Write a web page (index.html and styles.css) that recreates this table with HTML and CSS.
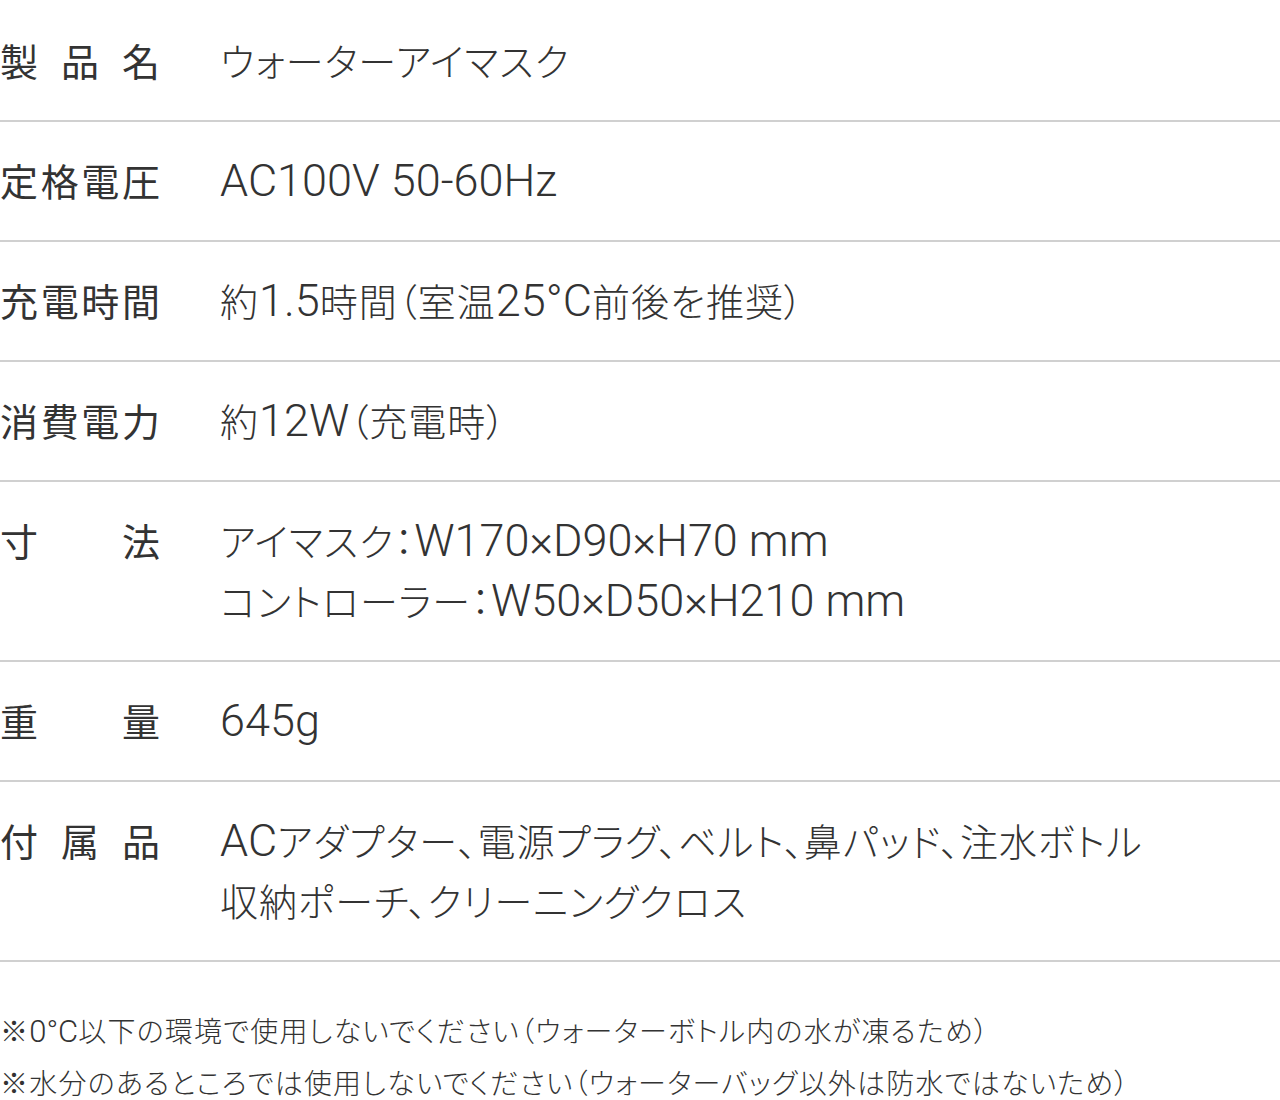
FILE: index.html
```html
<!DOCTYPE html>
<html lang="ja">
<head>
  <meta charset="UTF-8" />
  <meta name="viewport" content="width=device-width, initial-scale=1" />
  <title>ウォーターアイマスク 仕様</title>
  <link rel="stylesheet" href="styles.css">
</head>
<body>
  <div class="spec">
    <div class="spec-row">
      <div class="label"><span>製</span><span>品</span><span>名</span></div>
      <div class="value">ウォーターアイマスク</div>
    </div>
    <div class="spec-row">
      <div class="label"><span>定</span><span>格</span><span>電</span><span>圧</span></div>
      <div class="value"><span class="en">AC100V 50-60Hz</span></div>
    </div>
    <div class="spec-row">
      <div class="label"><span>充</span><span>電</span><span>時</span><span>間</span></div>
      <div class="value">約<span class="en">1.5</span>時間（室温<span class="en">25°C</span>前後を推奨）</div>
    </div>
    <div class="spec-row">
      <div class="label"><span>消</span><span>費</span><span>電</span><span>力</span></div>
      <div class="value">約<span class="en">12W</span>（充電時）</div>
    </div>
    <div class="spec-row">
      <div class="label"><span>寸</span><span>法</span></div>
      <div class="value">アイマスク：<span class="en">W170×D90×H70 mm</span><br>コントローラー：<span class="en">W50×D50×H210 mm</span></div>
    </div>
    <div class="spec-row">
      <div class="label"><span>重</span><span>量</span></div>
      <div class="value"><span class="en">645g</span></div>
    </div>
    <div class="spec-row">
      <div class="label"><span>付</span><span>属</span><span>品</span></div>
      <div class="value"><span class="en">AC</span>アダプター、電源プラグ、ベルト、鼻パッド、注水ボトル<br>収納ポーチ、クリーニングクロス</div>
    </div>
  </div>

  <div class="notes">
    <p>※<span class="en">0°C</span>以下の環境で使用しないでください（ウォーターボトル内の水が凍るため）</p>
    <p>※水分のあるところでは使用しないでください（ウォーターバッグ以外は防水ではないため）</p>
  </div>
</body>
</html>
```

FILE: styles.css
```css
* {
  margin: 0;
  padding: 0;
  box-sizing: border-box;
}

body {
  background: #fff;
  color: #333;
  font-family: 'Noto Sans CJK JP', 'Noto Sans', sans-serif;
  font-weight: 300;
  font-feature-settings: "palt";
}

.spec {
  padding-top: 2px;
}

.spec-row {
  display: flex;
  padding: 28px 0 30px;
  border-bottom: 2px solid #d0d0d0;
}

.label {
  display: flex;
  justify-content: space-between;
  width: 160px;
  flex-shrink: 0;
  font-size: 38px;
  line-height: 60px;
  font-weight: 400;
}

.value {
  margin-left: 60px;
  font-size: 38px;
  line-height: 60px;
  letter-spacing: 1px;
}

.en {
  font-family: Roboto, 'Liberation Sans', sans-serif;
  font-weight: 300;
  font-size: 45px;
  line-height: 30px;
  letter-spacing: 0;
}

.notes {
  padding-top: 42px;
  font-size: 28px;
  line-height: 52px;
  letter-spacing: 1.2px;
}

.notes .en {
  font-size: 31px;
  line-height: 24px;
}
```
